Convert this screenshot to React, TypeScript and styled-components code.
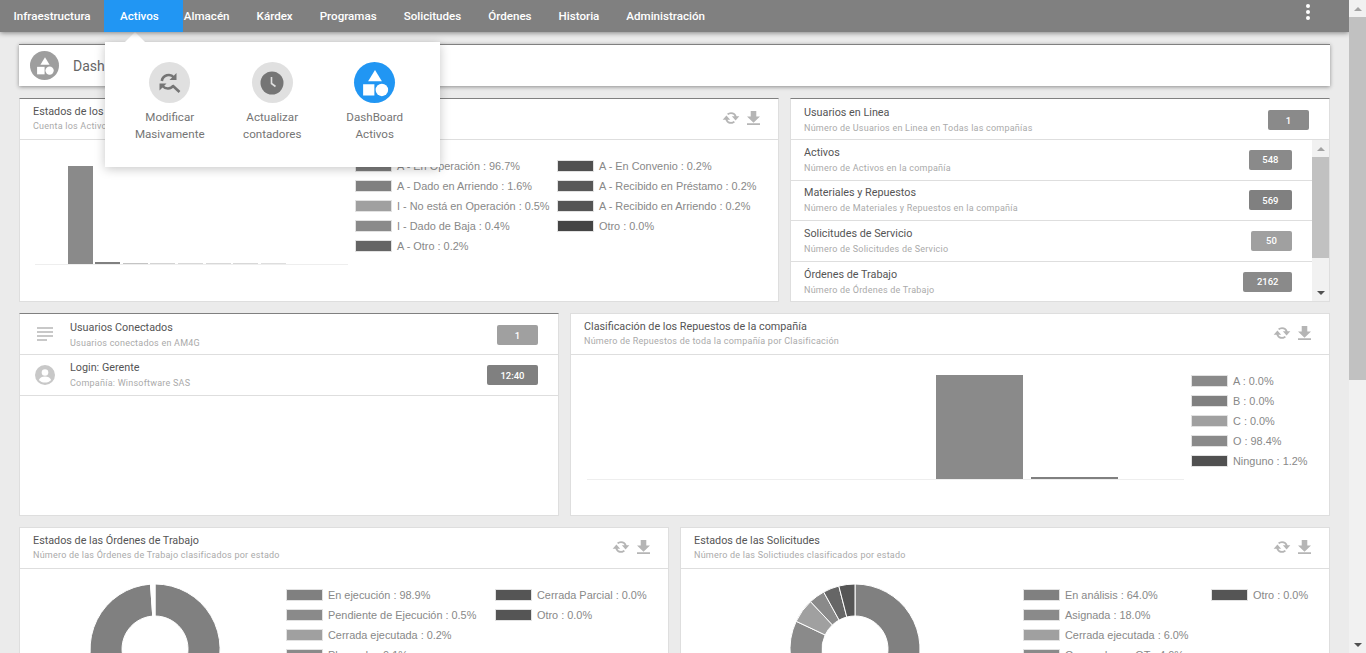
import styled, { createGlobalStyle } from 'styled-components'

const GlobalStyle = createGlobalStyle`
  html, body {
    margin: 0;
    padding: 0;
    height: 100%;
    overflow: hidden;
    background: #ebebeb;
    font-family: Roboto, "Liberation Sans", sans-serif;
  }
`

const Page = styled.div`
  position: relative;
  display: flex;
  height: 100vh;
  overflow: hidden;
`

const Main = styled.div`
  flex: 1;
  min-width: 0;
  overflow: hidden;
`

const ScrollTrack = styled.div`
  width: 17px;
  flex: none;
  display: flex;
  flex-direction: column;
  background: #f1f1f1;
`

const ScrollArrow = styled.div<{ $down?: boolean }>`
  height: 17px;
  flex: none;
  display: flex;
  align-items: center;
  justify-content: center;

  &::before {
    content: '';
    border-left: 4px solid transparent;
    border-right: 4px solid transparent;
    border-top: ${(p) => (p.$down ? '4px solid #505050' : 'none')};
    border-bottom: ${(p) => (p.$down ? 'none' : '4px solid #a3a3a3')};
  }
`

const ScrollThumb = styled.div<{ $size: number }>`
  height: ${(p) => p.$size}px;
  flex: none;
  background: #c1c1c1;
`

const ScrollGap = styled.div`
  flex: 1;
`

const Scrollbar = ({ thumb }: { thumb: number }) => (
  <ScrollTrack>
    <ScrollArrow />
    <ScrollThumb $size={thumb} />
    <ScrollGap />
    <ScrollArrow $down />
  </ScrollTrack>
)

const Header = styled.header`
  position: relative;
  z-index: 5;
  display: flex;
  align-items: stretch;
  height: 32px;
  background: #808080;
  box-shadow: 0 1px 5px rgba(0, 0, 0, 0.45);
`

const NavItem = styled.div<{ $active?: boolean }>`
  display: flex;
  align-items: center;
  padding: ${(p) => (p.$active ? '0 24px 0 16px' : '0 13.5px')};
  margin-right: ${(p) => (p.$active ? '-12.5px' : '0')};
  background: ${(p) => (p.$active ? '#2196f3' : 'transparent')};
  color: #fff;
  font-size: 11.6px;
  font-weight: 500;
  white-space: nowrap;
`

const MoreButton = styled.div`
  position: absolute;
  right: 39.5px;
  top: 4px;
  display: flex;
  flex-direction: column;
  gap: 2px;

  span {
    width: 4px;
    height: 4px;
    border-radius: 50%;
    background: #fff;
  }
`

const Popover = styled.div`
  position: absolute;
  z-index: 4;
  left: 105px;
  top: 42px;
  width: 335px;
  height: 125px;
  display: flex;
  justify-content: flex-start;
  padding: 20px 0 0 13.5px;
  box-sizing: border-box;
  background: #fff;
  box-shadow: 0 2px 10px rgba(0, 0, 0, 0.22);

  &::before {
    content: '';
    position: absolute;
    left: 20px;
    top: -10px;
    border-left: 10px solid transparent;
    border-right: 10px solid transparent;
    border-bottom: 10px solid #fff;
  }
`

const PopItem = styled.div`
  width: 102.5px;
  display: flex;
  flex-direction: column;
  align-items: center;
  text-align: center;
  font-size: 11.6px;
  line-height: 17px;
  color: #757575;
`

const PopCircle = styled.div<{ $active?: boolean }>`
  width: 41px;
  height: 41px;
  margin-bottom: 6px;
  border-radius: 50%;
  display: flex;
  align-items: center;
  justify-content: center;
  background: ${(p) => (p.$active ? '#2196f3' : '#e0e0e0')};
`

const Content = styled.main`
  display: flex;
  flex-direction: column;
  gap: 11px;
  padding: 12px 19px 0;
`

const TitleBar = styled.div`
  display: flex;
  align-items: center;
  gap: 14px;
  height: 41px;
  margin-bottom: 1px;
  padding-left: 11px;
  background: #fff;
  border-top: 1px solid #808080;
  box-shadow: 0 1px 4px rgba(0, 0, 0, 0.4);
  font-size: 14px;
  color: #666;
`

const TitleCircle = styled.div`
  width: 29px;
  height: 29px;
  border-radius: 50%;
  background: #9e9e9e;
  display: flex;
  align-items: center;
  justify-content: center;
`

const Row = styled.div`
  display: flex;
  gap: 11px;
`

const Card = styled.section<{ $width: number; $height: number; $dark?: boolean }>`
  width: ${(p) => p.$width}px;
  height: ${(p) => p.$height}px;
  flex: none;
  display: flex;
  flex-direction: column;
  box-sizing: border-box;
  background: #fff;
  border: 1px solid #dedede;
  border-top-color: ${(p) => (p.$dark ? '#808080' : '#dedede')};
  overflow: hidden;
`

const CardHead = styled.div<{ $pushed?: boolean; $lifted?: boolean }>`
  display: flex;
  align-items: center;
  height: 41px;
  flex: none;
  box-sizing: border-box;
  padding: ${(p) => (p.$pushed ? '2px' : '0')} 20px ${(p) => (p.$lifted ? '2px' : '0')} 13px;
  border-bottom: 1px solid #dedede;
`

const HeadText = styled.div`
  flex: 1;
  min-width: 0;
`

const Title = styled.div`
  font-size: 10.8px;
  line-height: 14px;
  color: #555;
`

const Sub = styled.div<{ $compact?: boolean }>`
  margin-top: ${(p) => (p.$compact ? '1px' : '2px')};
  font-size: 9px;
  line-height: 12px;
  color: #aaa;
  letter-spacing: 0.23px;
`

const Tools = styled.div`
  display: flex;
  align-items: center;
  gap: 6px;
  margin-right: -2px;
`

const Badge = styled.div<{ $tone?: string }>`
  min-width: 41px;
  height: 20px;
  box-sizing: border-box;
  padding: 0 13.5px;
  display: flex;
  align-items: center;
  justify-content: center;
  border-radius: 2px;
  background: ${(p) => p.$tone || '#8a8a8a'};
  color: #fff;
  font-size: 9.5px;
  font-weight: 500;
`

const ListArea = styled.div`
  flex: 1;
  min-height: 0;
  display: flex;
`

const ListRows = styled.div`
  flex: 1;
  min-width: 0;

  ${CardHead} {
    height: 40.6px;
  }
`

const LeadIcon = styled.div`
  width: 20px;
  flex: none;
  margin: 0 15px 0 2px;
  display: flex;
  align-items: center;
  justify-content: center;
`

const Body = styled.div`
  display: flex;
  align-items: flex-start;
  flex: 1;
`

const ChartArt = styled.svg`
  display: block;
  flex: none;
`

const Legend = styled.div<{ $column: number }>`
  display: grid;
  grid-auto-flow: column;
  grid-auto-columns: ${(p) => p.$column}px;
  padding-top: 16px;
`

const LegendColumn = styled.div`
  display: flex;
  flex-direction: column;
`

const LegendRow = styled.div`
  display: flex;
  align-items: center;
  gap: 5px;
  height: 20px;
  font-family: "Liberation Sans", Arial, sans-serif;
  font-size: 10.9px;
  color: #888;
  white-space: nowrap;
`

const Swatch = styled.span<{ $color: string; $accent?: boolean }>`
  width: 37px;
  height: 12px;
  flex: none;
  box-sizing: border-box;
  border: 1px solid #e2e2e2;
  background: ${(p) => (p.$accent ? `linear-gradient(#2aa58d 0 2px, ${p.$color} 2px)` : p.$color)};
`

type LegendEntry = { label: string; color: string; accent?: boolean }

const ChartLegend = ({ columns, column }: { columns: LegendEntry[][]; column: number }) => (
  <Legend $column={column}>
    {columns.map((col, i) => (
      <LegendColumn key={i}>
        {col.map((e) => (
          <LegendRow key={e.label}>
            <Swatch $color={e.color} $accent={e.accent} />
            {e.label}
          </LegendRow>
        ))}
      </LegendColumn>
    ))}
  </Legend>
)

const SyncIcon = () => (
  <svg width="20" height="20" viewBox="0 0 24 24" fill="#b5b5b5">
    <path d="M12 5a7 7 0 0 1 6.700 5H22l-4.500 5L13 10h3.400A4.800 4.800 0 0 0 12 7.200c-1.300 0-2.400.5-3.300 1.300L7.200 6.900A7 7 0 0 1 12 5zM6.500 9l4.500 5H7.600A4.800 4.800 0 0 0 12 16.800c1.300 0 2.400-.5 3.300-1.300l1.500 1.600A7 7 0 0 1 5.300 14H2z" />
  </svg>
)

const DownloadIcon = () => (
  <svg width="13" height="14" viewBox="0 0 14 15" fill="#b5b5b5">
    <path d="M4 0h6v6h4l-7 6.500L0 6h4zM0 13.200h14V15H0z" />
  </svg>
)

const CardTools = () => (
  <Tools>
    <SyncIcon />
    <DownloadIcon />
  </Tools>
)

const ShapesIcon = ({ size }: { size: number }) => (
  <svg width={size} height={size} viewBox="0 0 24 24" fill="#fff">
    <path d="M12 1.500l5.500 9h-11z" />
    <rect x="2.500" y="13" width="9" height="9" />
    <circle cx="17.500" cy="17.500" r="5" />
  </svg>
)

const SearchSyncIcon = () => (
  <svg width="24" height="24" viewBox="0 0 24 24" fill="none" stroke="#757575">
    <path d="M3.800 10a7 7 0 0 1 12.200-3.500" strokeWidth="2.600" />
    <path d="M18.500 2v7h-7z" fill="#757575" stroke="none" />
    <path d="M15.500 14.500a7 7 0 0 1-11 .5" strokeWidth="2.600" />
    <path d="M1.500 19.500v-7h7z" fill="#757575" stroke="none" />
    <path d="M14.500 14.500l7 6.500" strokeWidth="2.600" />
  </svg>
)

const ClockIcon = () => (
  <svg width="24" height="24" viewBox="0 0 24 24">
    <circle cx="12" cy="12" r="11.500" fill="#757575" />
    <path d="M11.500 6v6.500l4 3" fill="none" stroke="#e0e0e0" strokeWidth="1.600" />
  </svg>
)

const LinesIcon = () => (
  <svg width="16" height="16" viewBox="0 0 16 16" fill="#c8c8c8">
    <rect y="0" width="16" height="2" />
    <rect y="4" width="16" height="2" />
    <rect y="8" width="16" height="2" />
    <rect y="12" width="10" height="2" />
  </svg>
)

const UserIcon = () => (
  <svg width="20" height="20" viewBox="0 0 20 20">
    <circle cx="10" cy="10" r="10" fill="#c8c8c8" />
    <circle cx="10" cy="7.500" r="3.300" fill="#fff" />
    <path d="M3.800 15c1-2.500 3.500-3.500 6.200-3.500s5.200 1 6.200 3.500c-1.500 1.600-3.800 2.600-6.200 2.600S5.300 16.600 3.800 15z" fill="#fff" />
  </svg>
)

const slicePath = (cx: number, cy: number, r: number, ir: number, from: number, to: number) => {
  const pt = (rad: number, pct: number) => {
    const a = (pct / 100) * Math.PI * 2 - Math.PI / 2
    return `${(cx + rad * Math.cos(a)).toFixed(2)} ${(cy + rad * Math.sin(a)).toFixed(2)}`
  }
  const large = to - from > 50 ? 1 : 0
  return `M${pt(r, from)}A${r} ${r} 0 ${large} 1 ${pt(r, to)}L${pt(ir, to)}A${ir} ${ir} 0 ${large} 0 ${pt(ir, from)}Z`
}

const Donut = ({ width, cx, slices }: { width: number; cx: number; slices: { v: number; color: string }[] }) => {
  let acc = 0
  return (
    <ChartArt width={width} height={160}>
      {slices.map((s, i) => {
        const d = slicePath(cx, 80, 65, 33, acc, acc + s.v)
        acc += s.v
        return <path key={i} d={d} fill={s.color} stroke="#fff" strokeWidth="1" />
      })}
    </ChartArt>
  )
}

const assetsBars = [
  { x: 48, h: 98, c: '#8a8a8a' },
  { x: 75, h: 2, c: '#808080' },
  { x: 103, h: 1, c: '#c4c4c4' },
  { x: 130, h: 1, c: '#d4d4d4' },
  { x: 158, h: 1, c: '#d8d8d8' },
  { x: 186, h: 1, c: '#d8d8d8' },
  { x: 213, h: 1, c: '#d8d8d8' },
  { x: 241, h: 1, c: '#dedede' },
]

const stats = [
  { title: 'Activos', sub: 'Número de Activos en la compañía', value: '548', tone: '#8a8a8a' },
  { title: 'Materiales y Repuestos', sub: 'Número de Materiales y Repuestos en la compañía', value: '569', tone: '#808080' },
  { title: 'Solicitudes de Servicio', sub: 'Número de Solicitudes de Servicio', value: '50', tone: '#a0a0a0' },
  { title: 'Órdenes de Trabajo', sub: 'Número de Órdenes de Trabajo', value: '2162', tone: '#8a8a8a' },
]

const App = () => (
  <Page>
    <GlobalStyle />
    <Main>
      <Header>
        <NavItem>Infraestructura</NavItem>
        <NavItem $active>Activos</NavItem>
        <NavItem>Almacén</NavItem>
        <NavItem>Kárdex</NavItem>
        <NavItem>Programas</NavItem>
        <NavItem>Solicitudes</NavItem>
        <NavItem>Órdenes</NavItem>
        <NavItem>Historia</NavItem>
        <NavItem>Administración</NavItem>
        <MoreButton>
          <span />
          <span />
          <span />
        </MoreButton>
      </Header>

      <Popover>
        <PopItem>
          <PopCircle>
            <SearchSyncIcon />
          </PopCircle>
          Modificar
          <br />
          Masivamente
        </PopItem>
        <PopItem>
          <PopCircle>
            <ClockIcon />
          </PopCircle>
          Actualizar
          <br />
          contadores
        </PopItem>
        <PopItem>
          <PopCircle $active>
            <ShapesIcon size={30} />
          </PopCircle>
          DashBoard
          <br />
          Activos
        </PopItem>
      </Popover>

      <Content>
        <TitleBar>
          <TitleCircle>
            <ShapesIcon size={20} />
          </TitleCircle>
          DashBoard Activos
        </TitleBar>

        <Row>
          <Card $width={760} $height={204} $dark>
            <CardHead $lifted>
              <HeadText>
                <Title>Estados de los Activos</Title>
                <Sub $compact>Cuenta los Activos por estado</Sub>
              </HeadText>
              <CardTools />
            </CardHead>
            <Body>
              <ChartArt width={335} height={160}>
                <rect x="15" y="124" width="313" height="1" fill="#eee" />
                {assetsBars.map((b) => (
                  <rect key={b.x} x={b.x} y={124 - b.h} width="25" height={b.h} fill={b.c} />
                ))}
              </ChartArt>
              <ChartLegend
                column={202}
                columns={[
                  [
                    { label: 'A - En Operación : 96.7%', color: '#7c7c7c', accent: true },
                    { label: 'A - Dado en Arriendo : 1.6%', color: '#808080' },
                    { label: 'I - No está en Operación : 0.5%', color: '#a0a0a0' },
                    { label: 'I - Dado de Baja : 0.4%', color: '#8a8a8a' },
                    { label: 'A - Otro : 0.2%', color: '#646464' },
                  ],
                  [
                    { label: 'A - En Convenio : 0.2%', color: '#505050' },
                    { label: 'A - Recibido en Préstamo : 0.2%', color: '#585858' },
                    { label: 'A - Recibido en Arriendo : 0.2%', color: '#555' },
                    { label: 'Otro : 0.0%', color: '#444' },
                  ],
                ]}
              />
            </Body>
          </Card>

          <Card $width={540} $height={204} $dark>
            <CardHead $pushed>
              <HeadText>
                <Title>Usuarios en Linea</Title>
                <Sub>Número de Usuarios en Linea en Todas las compañías</Sub>
              </HeadText>
              <Badge>1</Badge>
            </CardHead>
            <ListArea>
              <ListRows>
                {stats.map((s) => (
                  <CardHead key={s.title}>
                    <HeadText>
                      <Title>{s.title}</Title>
                      <Sub>{s.sub}</Sub>
                    </HeadText>
                    <Badge $tone={s.tone}>{s.value}</Badge>
                  </CardHead>
                ))}
              </ListRows>
              <Scrollbar thumb={101} />
            </ListArea>
          </Card>
        </Row>

        <Row>
          <Card $width={540} $height={203} $dark>
            <CardHead $pushed>
              <LeadIcon>
                <LinesIcon />
              </LeadIcon>
              <HeadText>
                <Title>Usuarios Conectados</Title>
                <Sub>Usuarios conectados en AM4G</Sub>
              </HeadText>
              <Badge $tone="#a0a0a0">1</Badge>
            </CardHead>
            <CardHead>
              <LeadIcon>
                <UserIcon />
              </LeadIcon>
              <HeadText>
                <Title>Login: Gerente</Title>
                <Sub>Compañía: Winsoftware SAS</Sub>
              </HeadText>
              <Badge $tone="#808080">12:40</Badge>
            </CardHead>
          </Card>

          <Card $width={760} $height={203}>
            <CardHead $lifted>
              <HeadText>
                <Title>Clasificación de los Repuestos de la compañía</Title>
                <Sub $compact>Número de Repuestos de toda la compañía por Clasificación</Sub>
              </HeadText>
              <CardTools />
            </CardHead>
            <Body>
              <ChartArt width={620} height={160}>
                <rect x="16" y="124" width="597" height="1" fill="#eee" />
                <rect x="365" y="20" width="87" height="104" fill="#8a8a8a" />
                <rect x="460" y="122" width="87" height="2" fill="#808080" />
              </ChartArt>
              <ChartLegend
                column={130}
                columns={[
                  [
                    { label: 'A : 0.0%', color: '#8a8a8a' },
                    { label: 'B : 0.0%', color: '#808080' },
                    { label: 'C : 0.0%', color: '#a0a0a0' },
                    { label: 'O : 98.4%', color: '#8a8a8a' },
                    { label: 'Ninguno : 1.2%', color: '#505050' },
                  ],
                ]}
              />
            </Body>
          </Card>
        </Row>

        <Row>
          <Card $width={650} $height={240}>
            <CardHead $lifted>
              <HeadText>
                <Title>Estados de las Órdenes de Trabajo</Title>
                <Sub $compact>Número de las Órdenes de Trabajo clasificados por estado</Sub>
              </HeadText>
              <CardTools />
            </CardHead>
            <Body>
              <Donut
                width={266}
                cx={135}
                slices={[
                  { v: 98.9, color: '#808080' },
                  { v: 1.1, color: '#fff' },
                ]}
              />
              <ChartLegend
                column={209}
                columns={[
                  [
                    { label: 'En ejecución : 98.9%', color: '#808080' },
                    { label: 'Pendiente de Ejecución : 0.5%', color: '#8a8a8a' },
                    { label: 'Cerrada ejecutada : 0.2%', color: '#a0a0a0' },
                    { label: 'Planeada : 0.1%', color: '#8a8a8a' },
                  ],
                  [
                    { label: 'Cerrada Parcial : 0.0%', color: '#555' },
                    { label: 'Otro : 0.0%', color: '#555' },
                  ],
                ]}
              />
            </Body>
          </Card>

          <Card $width={650} $height={240}>
            <CardHead $lifted>
              <HeadText>
                <Title>Estados de las Solicitudes</Title>
                <Sub $compact>Número de las Solictiudes clasificados por estado</Sub>
              </HeadText>
              <CardTools />
            </CardHead>
            <Body>
              <Donut
                width={342}
                cx={174}
                slices={[
                  { v: 64, color: '#808080' },
                  { v: 18, color: '#8a8a8a' },
                  { v: 6, color: '#a0a0a0' },
                  { v: 4, color: '#8a8a8a' },
                  { v: 4, color: '#666' },
                  { v: 4, color: '#555' },
                ]}
              />
              <ChartLegend
                column={188}
                columns={[
                  [
                    { label: 'En análisis : 64.0%', color: '#808080' },
                    { label: 'Asignada : 18.0%', color: '#8a8a8a' },
                    { label: 'Cerrada ejecutada : 6.0%', color: '#a0a0a0' },
                    { label: 'Generada por OT : 4.0%', color: '#8a8a8a' },
                  ],
                  [{ label: 'Otro : 0.0%', color: '#555' }],
                ]}
              />
            </Body>
          </Card>
        </Row>
      </Content>
    </Main>
    <Scrollbar thumb={363} />
  </Page>
)

export default App
